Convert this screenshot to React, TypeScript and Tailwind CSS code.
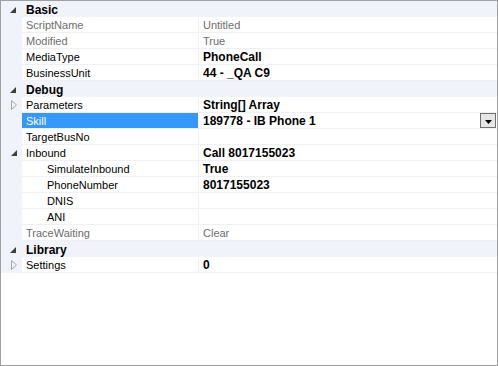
type Row =
  | { kind: 'cat'; label: string }
  | {
      kind: 'prop';
      label: string;
      value?: string;
      indent?: boolean;
      dim?: boolean;
      bold?: boolean;
      glyph?: 'open' | 'closed';
      selected?: boolean;
      dropdown?: boolean;
    };

const rows: Row[] = [
  { kind: 'cat', label: 'Basic' },
  { kind: 'prop', label: 'ScriptName', value: 'Untitled', dim: true },
  { kind: 'prop', label: 'Modified', value: 'True', dim: true },
  { kind: 'prop', label: 'MediaType', value: 'PhoneCall', bold: true },
  { kind: 'prop', label: 'BusinessUnit', value: '44 - _QA C9', bold: true },
  { kind: 'cat', label: 'Debug' },
  { kind: 'prop', label: 'Parameters', value: 'String[] Array', bold: true, glyph: 'closed' },
  { kind: 'prop', label: 'Skill', value: '189778 - IB Phone 1', bold: true, selected: true, dropdown: true },
  { kind: 'prop', label: 'TargetBusNo' },
  { kind: 'prop', label: 'Inbound', value: 'Call 8017155023', bold: true, glyph: 'open' },
  { kind: 'prop', label: 'SimulateInbound', value: 'True', bold: true, indent: true },
  { kind: 'prop', label: 'PhoneNumber', value: '8017155023', bold: true, indent: true },
  { kind: 'prop', label: 'DNIS', indent: true },
  { kind: 'prop', label: 'ANI', indent: true },
  { kind: 'prop', label: 'TraceWaiting', value: 'Clear', dim: true },
  { kind: 'cat', label: 'Library' },
  { kind: 'prop', label: 'Settings', value: '0', bold: true, glyph: 'closed' },
];

function Expanded() {
  return (
    <svg width="6" height="6" viewBox="0 0 6 6" className="block">
      <polygon points="0,6 6,6 6,0" fill="#404040" />
    </svg>
  );
}

function Collapsed() {
  return (
    <svg width="6" height="10" viewBox="0 0 6 10" className="block">
      <polygon points="0.5,0.5 5.5,5 0.5,9.5" fill="none" stroke="#a6a6a6" strokeWidth="1" />
    </svg>
  );
}

export default function App() {
  return (
    <div
      className="w-[498px] h-[366px] border border-[#a0a0a0] bg-white text-black overflow-hidden"
      style={{ fontFamily: '"Liberation Sans", Arial, sans-serif' }}
    >
      {rows.map((r, i) =>
        r.kind === 'cat' ? (
          <div key={i} className="flex h-4 bg-[#f0f3f9] items-center">
            <div className="w-[21px] flex justify-center pl-[3px] pt-[1px]">
              <Expanded />
            </div>
            <span className="pl-1 pt-[1px] text-[12px] font-bold leading-none">{r.label}</span>
          </div>
        ) : (
          <div key={i} className="flex h-4">
            <div className="w-[21px] bg-[#f0f3f9] flex items-center justify-center pl-[4px]">
              {r.glyph === 'open' && <Expanded />}
              {r.glyph === 'closed' && <Collapsed />}
            </div>
            <div
              className={`w-[176px] flex items-center pt-[1px] border-b border-[#eef0f4] text-[11px] ${
                r.indent ? 'pl-[25px]' : 'pl-1'
              } ${r.selected ? 'bg-[#3399ff] text-white' : r.dim ? 'text-[#6d6d6d]' : ''}`}
            >
              {r.label}
            </div>
            <div className="w-px bg-[#eef0f4]" />
            <div
              className={`flex-1 flex items-center justify-between border-b border-[#eef0f4] pl-1 pr-[1px] ${
                r.bold ? 'text-[12px] font-bold' : 'text-[11px]'
              } ${r.dim ? 'text-[#6d6d6d]' : ''}`}
            >
              <span className="pt-[1px]">{r.value}</span>
              {r.dropdown && (
                <div className="w-[16px] h-[15px] border border-[#707070] bg-[#e6e6e6] flex items-end justify-center pb-[3px]">
                  <svg width="7" height="4" viewBox="0 0 7 4">
                    <polygon points="0,0 7,0 3.5,4" fill="#000" />
                  </svg>
                </div>
              )}
            </div>
          </div>
        )
      )}
    </div>
  );
}
